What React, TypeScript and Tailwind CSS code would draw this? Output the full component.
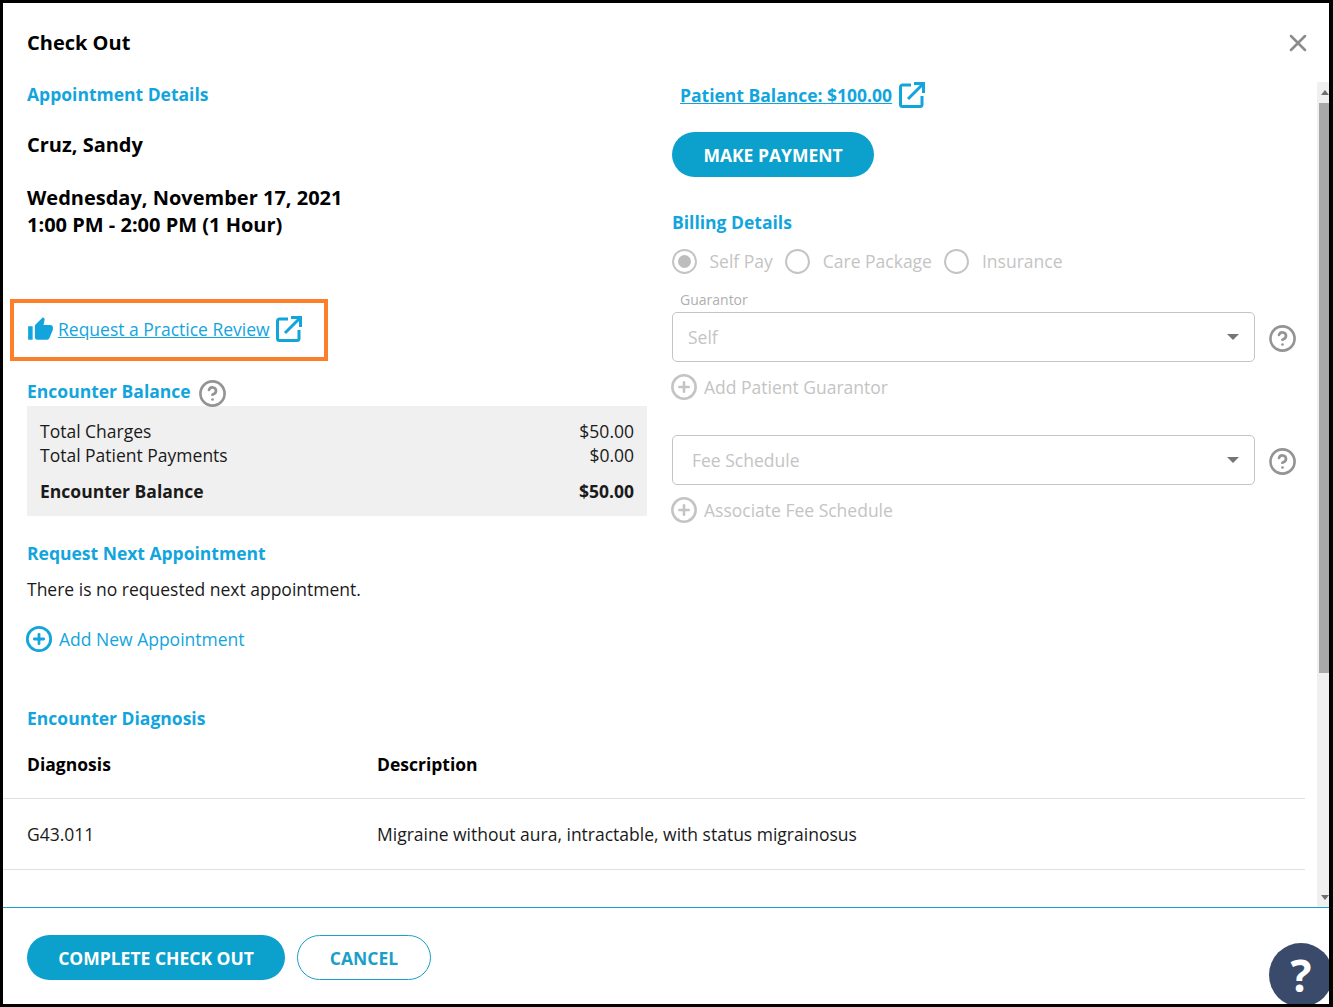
import { CircleHelp, CirclePlus, X } from "lucide-react";
import { MdThumbUp } from "react-icons/md";

function ExternalIcon() {
  return (
    <svg width="26" height="26" viewBox="0 0 26 26" fill="none" stroke="#12a5dd" strokeWidth="3" className="shrink-0">
      <path d="M12 3H3.5a2 2 0 0 0-2 2v17.5a2 2 0 0 0 2 2H21a2 2 0 0 0 2-2V14" />
      <path d="M9 17 24 2" />
      <path d="M15 1.5h9.5V11" />
    </svg>
  );
}

function Heading({ children, className }: { children: React.ReactNode; className?: string }) {
  return <h3 className={"h-6 text-[17.5px] leading-6 font-bold text-[#12a5dd] " + (className ?? "")}>{children}</h3>;
}

function Radio({ label, checked }: { label: string; checked?: boolean }) {
  return (
    <div className="flex items-center">
      <span className="flex w-[25px] h-[25px] items-center justify-center rounded-full border-2 border-[#c4c4c4]">
        {checked && <span className="w-[13px] h-[13px] rounded-full bg-[#bdbdbd]" />}
      </span>
      <span className="ml-[12.5px] text-[17.5px] text-[#c4c4c4]">{label}</span>
    </div>
  );
}

function SelectBox({ value, textPad }: { value: string; textPad: string }) {
  return (
    <div className="flex items-center">
      <div className={"flex w-[583px] h-[50px] items-center justify-between rounded-[5px] border border-[#c4c4c4] pr-[15px] " + textPad}>
        <span className="text-[17.5px] text-[#c4c4c4]">{value}</span>
        <span className="w-0 h-0 border-x-[6px] border-t-[6px] border-x-transparent border-t-[#757575]" />
      </div>
      <CircleHelp size={29} strokeWidth={2.2} className="ml-[13px] mt-[3px] text-[#949494]" />
    </div>
  );
}

function DisabledAdd({ label }: { label: string }) {
  return (
    <div className="flex h-6 items-center text-[17.5px] text-[#c4c4c4]">
      <CirclePlus size={28} strokeWidth={2.2} className="-ml-0.5" />
      <span className="ml-[6px]">{label}</span>
    </div>
  );
}

export default function App() {
  return (
    <div className="relative flex flex-col w-[1333px] h-[1007px] overflow-hidden bg-white border-t-[3px] border-l-[3px] border-r-[4px] border-b-[3px] border-black font-['Open_Sans',sans-serif] text-[17.5px] text-[#1a1a1a]">
      <header className="flex h-[79px] shrink-0 items-center justify-between pl-6 pr-[17px]">
        <h2 className="text-[20px] font-bold text-black">Check Out</h2>
        <X size={28} strokeWidth={2.2} className="text-[#8c8c8c]" />
      </header>

      <div className="flex flex-1 min-h-0">
        <main className="flex-1 min-w-0 pr-3">
          <div className="flex pl-6">
            <section className="w-[620px] shrink-0">
              <Heading>Appointment Details</Heading>
              <p className="mt-[25px] text-[20px] leading-7 font-bold text-black">Cruz, Sandy</p>
              <p className="mt-[25px] text-[20px] leading-[27px] font-bold text-black">
                Wednesday, November 17, 2021
                <br />
                1:00 PM - 2:00 PM (1 Hour)
              </p>

              <div className="flex w-[318px] h-[62px] items-center mt-[61px] -ml-[17px] pl-[13px] pb-[2px] border-4 border-[#fd7f2a]">
                <MdThumbUp size={27} className="text-[#12a5dd] shrink-0" />
                <a className="ml-[4px] text-[17.5px] text-[#12a5dd] underline">Request a Practice Review</a>
                <span className="ml-[6px]"><ExternalIcon /></span>
              </div>

              <div className="flex h-[25px] mt-5 items-start">
                <h3 className="text-[17.5px] leading-5 font-bold text-[#12a5dd]">Encounter Balance</h3>
                <CircleHelp size={29} strokeWidth={2.2} className="ml-[7px] -mt-0.5 text-[#949494]" />
              </div>

              <div className="py-[13px] pl-[13px] pr-[13px] bg-[#f0f0f0] leading-6">
                <div className="flex justify-between">
                  <span>Total Charges</span>
                  <span>$50.00</span>
                </div>
                <div className="flex justify-between">
                  <span>Total Patient Payments</span>
                  <span>$0.00</span>
                </div>
                <div className="flex justify-between mt-3 font-bold">
                  <span>Encounter Balance</span>
                  <span>$50.00</span>
                </div>
              </div>

              <Heading className="mt-[25px]">Request Next Appointment</Heading>
              <p className="mt-3 leading-6">There is no requested next appointment.</p>
              <div className="flex h-6 items-center mt-[26px] text-[#12a5dd]">
                <CirclePlus size={28} strokeWidth={2.4} className="-ml-0.5" />
                <span className="ml-[6px]">Add New Appointment</span>
              </div>

              <Heading className="mt-[55px]">Encounter Diagnosis</Heading>
            </section>

            <section className="ml-[25px] flex-1">
              <div className="flex h-[26px] items-center ml-2">
                <a className="text-[17.5px] font-bold text-[#12a5dd] underline">Patient Balance: $100.00</a>
                <span className="ml-[7px]"><ExternalIcon /></span>
              </div>
              <button className="block w-[202px] h-[45px] mt-[24px] pt-px rounded-full bg-[#0ca0cc] text-[17.5px] font-bold text-white">MAKE PAYMENT</button>
              <Heading className="mt-[33px]">Billing Details</Heading>
              <div className="flex h-[25px] items-center mt-[15px]">
                <Radio label="Self Pay" checked />
                <div className="ml-[12.5px]"><Radio label="Care Package" /></div>
                <div className="ml-[12.5px]"><Radio label="Insurance" /></div>
              </div>
              <p className="mt-[16px] ml-2 text-[14px] leading-[20px] text-[#b0b0b0]">Guarantor</p>
              <div className="mt-[2px]"><SelectBox value="Self" textPad="pl-[15px]" /></div>
              <div className="mt-[13px]"><DisabledAdd label="Add Patient Guarantor" /></div>
              <div className="mt-[36px]"><SelectBox value="Fee Schedule" textPad="pl-[19px]" /></div>
              <div className="mt-[13px]"><DisabledAdd label="Associate Fee Schedule" /></div>
            </section>
          </div>

          <div className="grid grid-cols-[350px_1fr] h-[69px] items-center pl-6 border-b border-[#e0e0e0] font-bold text-black">
            <span>Diagnosis</span>
            <span>Description</span>
          </div>
          <div className="grid grid-cols-[350px_1fr] h-[71px] items-center pl-6 border-b border-[#e0e0e0]">
            <span>G43.011</span>
            <span>Migraine without aura, intractable, with status migrainosus</span>
          </div>
        </main>

        <div className="flex flex-col w-3 shrink-0 bg-[#f0f0f0]">
          <div className="flex h-[21px] items-center justify-center">
            <span className="w-0 h-0 ml-1 border-x-[4px] border-b-[5px] border-x-transparent border-b-[#6e6e6e]" />
          </div>
          <div className="h-[570px] ml-[2px] bg-[#a8a8a8]" />
          <div className="flex flex-1 items-end justify-center pb-[7px]">
            <span className="w-0 h-0 ml-1 border-x-[4px] border-t-[5px] border-x-transparent border-t-[#6e6e6e]" />
          </div>
        </div>
      </div>

      <footer className="flex h-[97px] shrink-0 gap-3 pt-[27px] pl-6 border-t border-[#1a9fc9]">
        <button className="w-[258px] h-[45px] pt-px rounded-full bg-[#0ca0cc] text-[17.5px] font-bold text-white">COMPLETE CHECK OUT</button>
        <button className="w-[134px] h-[45px] pt-px rounded-full border border-[#1a9fc9] text-[17.5px] font-bold text-[#1a9fc9]">CANCEL</button>
      </footer>

      <div className="absolute left-[1266px] top-[940px] flex w-[64px] h-[64px] items-center justify-center rounded-full bg-[#3a4a6b] text-[44px] font-bold text-white">?</div>
    </div>
  );
}
